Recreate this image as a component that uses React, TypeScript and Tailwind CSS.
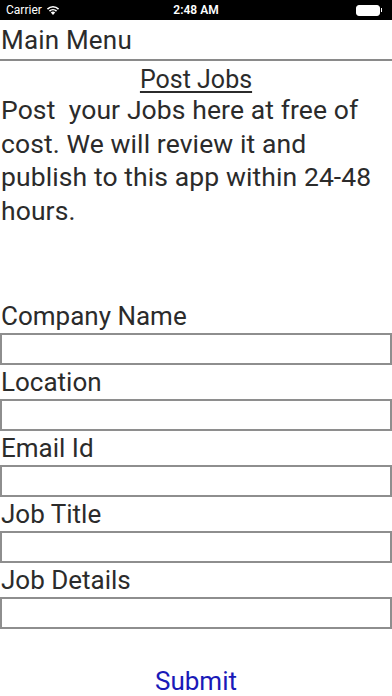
import React from "react";

const fields = ["Company Name", "Location", "Email Id", "Job Title", "Job Details"];

export default function App() {
  return (
    <div className="w-[392px] h-[696px] bg-white text-[#2b2b2b] overflow-hidden" style={{ fontFamily: "Roboto, 'Liberation Sans', sans-serif" }}>
      <div className="h-[20px] bg-black flex items-center px-[6px] text-white text-[12px] relative">
        <span className="flex items-center gap-[4px]">
          Carrier
          <svg width="14" height="10" viewBox="0 0 14 10" fill="white">
            <path d="M7 10 L4.8 7.6 A3.2 3.2 0 0 1 9.2 7.6 Z" />
            <path d="M2.9 5.6 A5.9 5.9 0 0 1 11.1 5.6 L10 6.7 A4.3 4.3 0 0 0 4 6.7 Z" />
            <path d="M0.9 3.6 A8.6 8.6 0 0 1 13.1 3.6 L12 4.7 A7 7 0 0 0 2 4.7 Z" />
          </svg>
        </span>
        <span className="absolute left-0 right-0 text-center font-semibold pointer-events-none">2:48 AM</span>
        <span className="ml-auto mr-[4px] flex items-center">
          <span className="w-[24px] h-[11px] rounded-[3px] border border-white bg-white" />
          <span className="w-[1.5px] h-[4px] bg-white ml-[1px]" />
        </span>
      </div>
      <div className="h-[41px] flex items-center pl-[1px] text-[26px] leading-none border-b-2 border-[#8a8a8a] tracking-[0.2px]">Main Menu</div>
      <div className="text-center text-[25px] leading-[30px] mt-[4px] underline underline-offset-[3px] decoration-[1.5px]">Post Jobs</div>
      <p className="text-[26.5px] leading-[33.5px] pl-[1px] -mt-[2px] tracking-[0.1px]">
        Post&nbsp; your Jobs here at free of<br />cost. We will review it and<br />publish to this app within 24-48<br />hours.
      </p>
      <div className="mt-[73px] flex flex-col">
        {fields.map((f) => (
          <div key={f} className="flex flex-col">
            <div className="text-[26px] leading-[33px] pl-[1px]">{f}</div>
            <div className="h-[32px] border-2 border-[#8e8e8e] mb-[1px]" />
          </div>
        ))}
      </div>
      <div className="text-center text-[26px] leading-[30px] mt-[36px] text-[#1a1ab8]">Submit</div>
    </div>
  );
}
